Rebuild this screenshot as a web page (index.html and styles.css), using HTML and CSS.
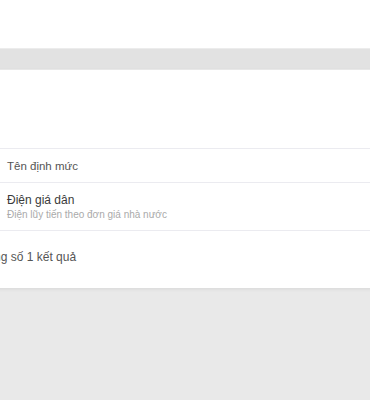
FILE: index.html
```html
<!DOCTYPE html>
<html lang="vi">
<head>
    <meta charset="UTF-8">
    <meta name="viewport" content="width=device-width, initial-scale=1.0">
    <title>Định mức</title>
    <link rel="stylesheet" href="styles.css">
</head>
<body>
    <div class="topbar"></div>
    <div class="band"></div>
    <div class="page">
        <div class="card">
            <div class="card-head"></div>
            <table class="list">
                <thead>
                    <tr>
                        <th>Tên định mức</th>
                    </tr>
                </thead>
                <tbody>
                    <tr>
                        <td>
                            <div class="name">Điện giá dân</div>
                            <div class="desc">Điện lũy tiến theo đơn giá nhà nước</div>
                        </td>
                    </tr>
                </tbody>
            </table>
            <div class="total">Tổng số 1 kết quả</div>
        </div>
    </div>
</body>
</html>
```

FILE: styles.css
```css
body {
    margin: 0;
    font-family: "Liberation Sans", Arial, sans-serif;
    background-color: #e9e9e9;
    overflow: hidden;
}
.topbar {
    height: 48px;
    background-color: #ffffff;
}
.band {
    height: 20px;
    background-color: #e2e2e2;
    border-top: 1px solid #ececec;
    border-bottom: 1px solid #ececec;
}
.page {
    background-color: #e9e9e9;
    padding-bottom: 120px;
}
.card {
    margin: 0 -30px;
    background-color: #ffffff;
    box-shadow: 0 1px 4px rgba(0, 0, 0, 0.08);
}
.card-head {
    height: 78px;
}
.list {
    width: 100%;
    border-collapse: collapse;
}
.list th,
.list td {
    text-align: left;
    padding: 0 0 0 37px;
    border-top: 1px solid #ebebf0;
    border-bottom: 1px solid #ebebf0;
}
.list th {
    height: 33px;
    font-size: 11.5px;
    font-weight: normal;
    color: #555;
}
.list td {
    height: 47px;
}
.name {
    font-size: 12px;
    color: #3a3a3a;
    line-height: 16px;
}
.desc {
    font-size: 10px;
    color: #aaa;
    line-height: 14px;
}
.total {
    padding: 0 0 0 10px;
    height: 57px;
    line-height: 52px;
    font-size: 12px;
    color: #555;
}
```
